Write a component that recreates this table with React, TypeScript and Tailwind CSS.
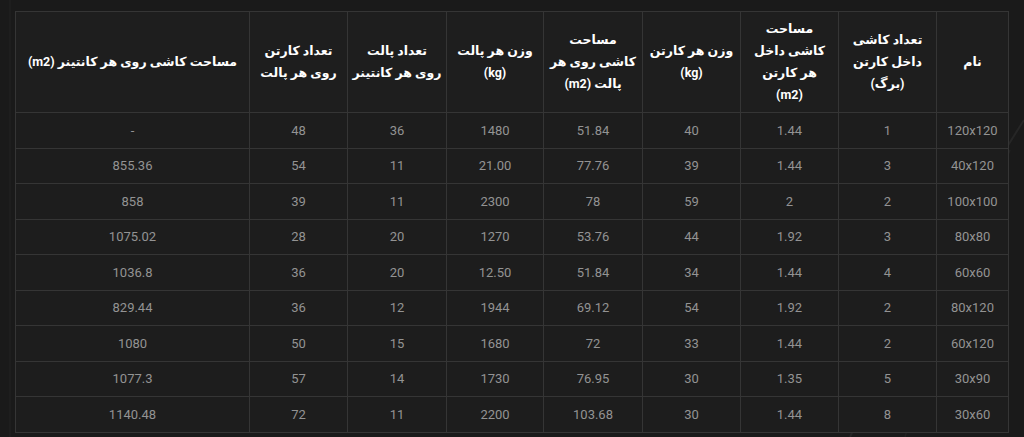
import React from "react";

const headers: React.ReactNode[] = [
  <>نام</>,
  <>تعداد کاشی<br />داخل کارتن<br />(برگ)</>,
  <>مساحت<br />کاشی داخل<br />هر کارتن<br />(m2)</>,
  <>وزن هر کارتن<br />(kg)</>,
  <>مساحت<br />کاشی روی هر<br />پالت (m2)</>,
  <>وزن هر پالت<br />(kg)</>,
  <>تعداد پالت<br />روی هر کانتینر</>,
  <>تعداد کارتن<br />روی هر پالت</>,
  <>مساحت کاشی روی هر کانتینر (m2)</>,
];

const widths = [
  "w-[72px]",
  "w-[98px]",
  "w-[98px]",
  "w-[98px]",
  "w-[99px]",
  "w-[97px]",
  "w-[99px]",
  "w-[98px]",
  "w-[234px]",
];

const rows: string[][] = [
  ["120x120", "1", "1.44", "40", "51.84", "1480", "36", "48", "-"],
  ["40x120", "3", "1.44", "39", "77.76", "21.00", "11", "54", "855.36"],
  ["100x100", "2", "2", "59", "78", "2300", "11", "39", "858"],
  ["80x80", "3", "1.92", "44", "53.76", "1270", "20", "28", "1075.02"],
  ["60x60", "4", "1.44", "34", "51.84", "12.50", "20", "36", "1036.8"],
  ["80x120", "2", "1.92", "54", "69.12", "1944", "12", "36", "829.44"],
  ["60x120", "2", "1.44", "33", "72", "1680", "15", "50", "1080"],
  ["30x90", "5", "1.35", "30", "76.95", "1730", "14", "57", "1077.3"],
  ["30x60", "8", "1.44", "30", "103.68", "2200", "11", "72", "1140.48"],
];

export default function App() {
  return (
    <div
      className="relative w-[1024px] h-[437px] overflow-hidden bg-[#1a1a1a] pl-[15px] pt-[11px]"
      style={{ fontFamily: '"Roboto", "DejaVu Sans", sans-serif' }}
    >
      <svg
        className="absolute inset-0 pointer-events-none"
        width="1024"
        height="437"
        viewBox="0 0 1024 437"
      >
        <path d="M1024 120 C 960 220, 900 330, 850 437" stroke="#262626" strokeWidth="2" fill="none" />
        <path d="M1010 150 C 970 250, 930 350, 905 437" stroke="#222" strokeWidth="1.5" fill="none" />
        <path d="M10 0 L 10 437" stroke="#222" strokeWidth="1" fill="none" />
      </svg>
      <table dir="rtl" className="relative table-fixed border-collapse w-[993px] bg-[#1d1d1d]">
        <colgroup>
          {widths.map((w, i) => (
            <col key={i} className={w} />
          ))}
        </colgroup>
        <thead>
          <tr>
            {headers.map((h, i) => (
              <th
                key={i}
                className="h-[101px] border border-[#353535] bg-[#1e1e1e] text-center align-middle text-[12.5px] font-bold leading-[22px] text-white whitespace-nowrap p-0"
              >
                {h}
              </th>
            ))}
          </tr>
        </thead>
        <tbody>
          {rows.map((r, ri) => (
            <tr key={ri}>
              {r.map((c, ci) => (
                <td
                  key={ci}
                  className="h-[35.5px] border border-[#353535] text-center align-middle text-[13px] text-[#939393] p-0"
                >
                  {c}
                </td>
              ))}
            </tr>
          ))}
        </tbody>
      </table>
    </div>
  );
}
